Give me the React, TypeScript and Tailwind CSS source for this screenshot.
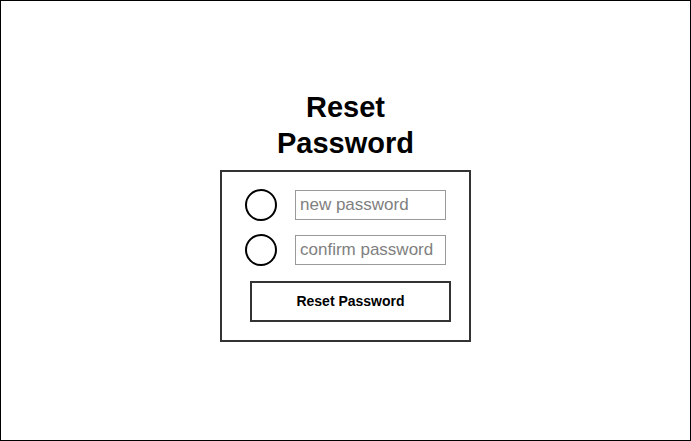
export default function App() {
  return (
    <div
      className="w-[691px] h-[441px] border border-black bg-white flex flex-col items-center pt-[88px]"
      style={{ fontFamily: '"Liberation Sans", Arial, sans-serif' }}
    >
      {/* Title */}
      <h1 className="text-[29px] leading-[36px] font-bold text-black text-center">
        Reset
        <br />
        Password
      </h1>

      {/* Card */}
      <div className="mt-[9px] w-[251px] h-[172px] border-2 border-[#333] flex flex-col pt-[17px] pl-[23px]">
        <div className="flex items-center gap-[18px] h-[32px]">
          <span className="w-[32px] h-[32px] rounded-full border-2 border-black shrink-0" />
          <input
            type="password"
            placeholder="new password"
            className="w-[151px] h-[30px] border border-[#999] px-[4px] text-[17px] text-[#555] placeholder:text-[#808080] outline-none"
          />
        </div>
        <div className="flex items-center gap-[18px] h-[32px] mt-[13px]">
          <span className="w-[32px] h-[32px] rounded-full border-2 border-black shrink-0" />
          <input
            type="password"
            placeholder="confirm password"
            className="w-[151px] h-[30px] border border-[#999] px-[4px] text-[17px] text-[#555] placeholder:text-[#808080] outline-none"
          />
        </div>
        <button className="mt-[15px] ml-[5px] w-[201px] h-[41px] border-2 border-[#333] bg-white text-[14px] font-bold text-black">
          Reset Password
        </button>
      </div>
    </div>
  );
}
